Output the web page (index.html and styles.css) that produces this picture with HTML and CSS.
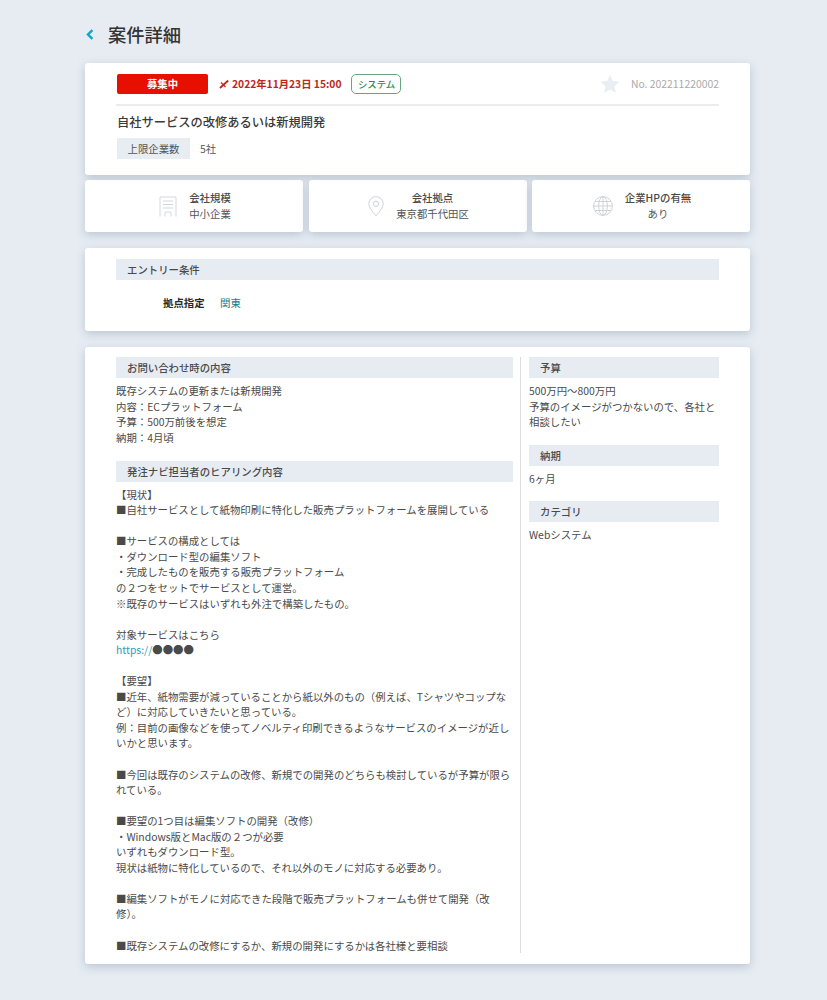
FILE: index.html
```html
<!DOCTYPE html>
<html lang="ja">
<head>
<meta charset="utf-8">
<title>案件詳細</title>
<link rel="stylesheet" href="styles.css">
</head>
<body>
<div class="page">
  <header class="page-head">
    <svg class="back" viewBox="0 0 8 11" width="8" height="11"><path d="M6.400 1.200 2 5.500l4.400 4.300" fill="none" stroke="#08a9cb" stroke-width="2.400"/></svg>
    <h1>案件詳細</h1>
  </header>

  <section class="card summary">
    <div class="summary-top">
      <span class="status">募集中</span>
      <span class="deadline">
        <svg viewBox="0 0 10 10" width="10" height="10"><path d="M2 3.500 6.500 8" fill="none" stroke="#c4251f" stroke-width="1.200"/><path d="M9.200 1.500 1 9" fill="none" stroke="#c4251f" stroke-width="1.800"/></svg>
        2022年11月23日 15:00
      </span>
      <span class="tag">システム</span>
      <svg class="star" viewBox="0 0 20 20" width="20" height="20"><path d="M10 .8l2.800 6.200 6.700.7-5 4.500 1.400 6.600L10 15.400l-5.900 3.400 1.400-6.600-5-4.500 6.700-.7z" fill="#e9eef2"/></svg>
      <span class="number">No. 202211220002</span>
    </div>
    <h2>自社サービスの改修あるいは新規開発</h2>
    <div class="limit"><span class="limit-label">上限企業数</span><span>5社</span></div>
  </section>

  <div class="facts">
    <div class="card fact">
      <svg viewBox="0 0 18 21" width="18" height="21" fill="none" stroke="#d3d7da"><path d="M1 20.500V1h16v19.500M4 5h10M4 8.500h10M4 12h10M6 20.500v-4.500h6v4.500"/></svg>
      <div class="fact-text"><strong>会社規模</strong><span>中小企業</span></div>
    </div>
    <div class="card fact">
      <svg viewBox="0 0 16 21" width="16" height="21" fill="none" stroke="#cfd3d6"><path d="M8 20C4 15 .8 11.500.8 7.800a7.200 7.200 0 0 1 14.400 0C15.200 11.500 12 15 8 20z"/><circle cx="8" cy="7.800" r="2.600"/></svg>
      <div class="fact-text"><strong>会社拠点</strong><span>東京都千代田区</span></div>
    </div>
    <div class="card fact">
      <svg viewBox="0 0 20 20" width="20" height="20" fill="none" stroke="#cfd3d6"><circle cx="10" cy="10" r="9.400"/><ellipse cx="10" cy="10" rx="4.400" ry="9.400"/><path d="M10 .6v18.800M.6 10h18.800M2 5.500h16M2 14.500h16"/></svg>
      <div class="fact-text"><strong>企業HPの有無</strong><span>あり</span></div>
    </div>
  </div>

  <section class="card entry">
    <h3 class="bar">エントリー条件</h3>
    <div class="entry-row"><strong>拠点指定</strong><span class="teal">関東</span></div>
  </section>

  <section class="card detail">
    <div class="detail-main">
      <h3 class="bar">お問い合わせ時の内容</h3>
      <p class="body-text">既存システムの更新または新規開発
内容：ECプラットフォーム
予算：500万前後を想定
納期：4月頃</p>
      <h3 class="bar">発注ナビ担当者のヒアリング内容</h3>
      <p class="body-text">【現状】
■自社サービスとして紙物印刷に特化した販売プラットフォームを展開している

■サービスの構成としては
・ダウンロード型の編集ソフト
・完成したものを販売する販売プラットフォーム
の２つをセットでサービスとして運営。
※既存のサービスはいずれも外注で構築したもの。

対象サービスはこちら
<span class="link">https://</span>●●●●

【要望】
■近年、紙物需要が減っていることから紙以外のもの（例えば、Tシャツやコップなど）に対応していきたいと思っている。
例：目前の画像などを使ってノベルティ印刷できるようなサービスのイメージが近しいかと思います。

■今回は既存のシステムの改修、新規での開発のどちらも検討しているが予算が限られている。

■要望の1つ目は編集ソフトの開発（改修）
・Windows版とMac版の２つが必要
いずれもダウンロード型。
現状は紙物に特化しているので、それ以外のモノに対応する必要あり。

■編集ソフトがモノに対応できた段階で販売プラットフォームも併せて開発（改修）。

■既存システムの改修にするか、新規の開発にするかは各社様と要相談</p>
    </div>
    <aside class="detail-side">
      <h3 class="bar">予算</h3>
      <p class="body-text">500万円～800万円
予算のイメージがつかないので、各社と相談したい</p>
      <h3 class="bar">納期</h3>
      <p class="body-text">6ヶ月</p>
      <h3 class="bar">カテゴリ</h3>
      <p class="body-text">Webシステム</p>
    </aside>
  </section>
</div>
</body>
</html>
```
FILE: styles.css
```css
* { box-sizing: border-box; }
html, body { margin: 0; padding: 0; }
body {
  background: #e7ecf3;
  color: #4a4a4a;
  font-family: "Noto Sans CJK JP", "Noto Sans", sans-serif;
  font-size: 10.4px;
  line-height: 15.55px;
  height: 1000px;
  overflow: hidden;
}
.page { width: 665px; margin-left: 85px; }
.page-head { display: flex; align-items: center; height: 63px; padding-top: 5px; }
.back { margin-left: 1px; }
h1 { margin: 0 0 0 14px; font-size: 18.3px; font-weight: 500; color: #333; line-height: 26px; }
.card {
  background: #fff;
  border-radius: 3px;
  box-shadow: 0 3px 10px rgba(110, 130, 150, .36);
}
.summary { height: 112px; padding: 11px 31px 0; }
.summary-top {
  display: flex;
  align-items: center;
  box-sizing: content-box;
  height: 20px;
  padding-bottom: 10px;
  border-bottom: 2px solid #ececec;
}
.status {
  width: 91px; height: 20px; margin-left: 1px;
  background: #e60f00; color: #fff; border-radius: 2px;
  text-align: center; font-weight: 700; line-height: 20px;
}
.deadline {
  display: flex; align-items: center; gap: 3px;
  margin-left: 11px; color: #bd2620; font-weight: 700; font-size: 10.3px;
}
.tag {
  width: 50px; height: 20px; margin-left: 10px;
  border: 1px solid #6aa57a; border-radius: 5px;
  color: #2f8a4d; font-size: 9.4px; font-weight: 500; line-height: 18px; text-align: center;
}
.star { margin-left: auto; }
.number { margin-left: 11px; color: #aaa; font-size: 10.4px; }
h2 { margin: 6px 0 0 1px; font-size: 12.25px; font-weight: 500; line-height: 20px; color: #3a3a3a; }
.limit { display: flex; align-items: center; margin: 6px 0 0 1px; color: #555; }
.limit-label {
  width: 73px; height: 21px; margin-right: 10px;
  background: #e8edf2; text-align: center; line-height: 21px; color: #555;
}
.facts { display: flex; gap: 5.5px; margin-top: 5px; }
.fact {
  flex: 1; height: 52px; padding-left: 2px;
  display: flex; align-items: center; justify-content: center; gap: 12px;
}
.fact svg { flex: none; }
.fact-text { display: flex; flex-direction: column; align-items: center; color: #555; }
.fact-text strong { font-weight: 500; color: #4a4a4a; }
.entry { height: 83px; margin-top: 16px; padding: 11px 31px 0; }
.bar {
  margin: 0; height: 21px; padding-left: 11px;
  background: #e7ecf3; color: #4a4a4a;
  font-size: 10.4px; font-weight: 500; line-height: 21px;
}
.entry-row { display: flex; gap: 15.5px; margin: 15px 0 0 47px; }
.entry-row strong { font-weight: 700; color: #2a2a2a; }
.teal { color: #167c86; }
.detail { display: flex; height: 617px; margin-top: 16px; padding: 10px 31px 11px; }
.detail-main { width: 397px; }
.detail-side { width: 199px; margin-left: 7px; padding-left: 8px; border-left: 1px solid #dcdcdc; }
.detail-side .bar { width: 190px; }
.body-text { margin: 5px 0 15.500px; white-space: pre-line; color: #4a4a4a; }
.detail-side .body-text { margin-bottom: 15px; }
.detail-main .body-text:last-child { margin-bottom: 0; }
.link { color: #1fa0b8; }
```
